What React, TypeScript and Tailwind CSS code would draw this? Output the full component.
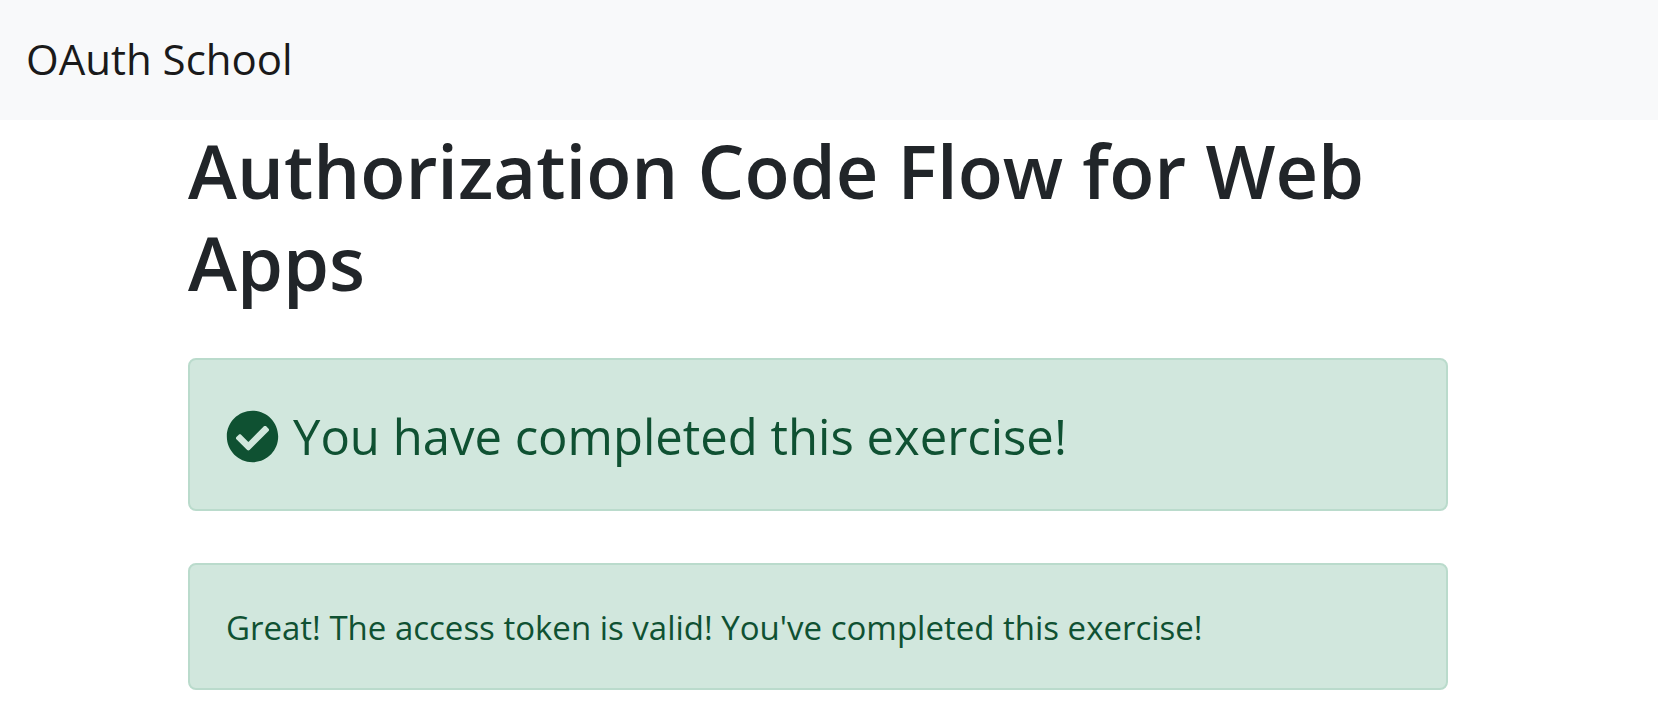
import type { ReactNode } from "react";
import { FaCheckCircle } from "react-icons/fa";

function SuccessAlert({ children }: { children: ReactNode }) {
  return (
    <div role="alert" className="rounded-lg border-2 border-[#badbcc] bg-[#d1e7dd] px-9 pt-[37px] pb-[35px] text-[#0f5132]">
      {children}
    </div>
  );
}

export default function App() {
  return (
    <div className="min-h-screen bg-white font-['Open_Sans','Noto_Sans',sans-serif] text-[#212529]">
      <header className="bg-[#f8f9fa] px-[26px] pt-[29px] pb-[31px]">
        <a href="#" className="block text-[42px] leading-[60px] text-[#1a1a1a]">OAuth School</a>
      </header>
      <main className="mr-[210px] ml-[188px] pt-[5px]">
        <h1 className="mb-[49px] text-[74px] leading-[92px] font-semibold">Authorization Code Flow for Web Apps</h1>
        <div className="flex flex-col gap-[52px]">
          <SuccessAlert>
            <h2 className="flex items-center gap-[14px] pt-[7px] pb-[5px] text-[49px] leading-[65px] font-normal">
              <FaCheckCircle className="size-[53px] shrink-0" aria-hidden="true" />
              You have completed this exercise!
            </h2>
          </SuccessAlert>
          <SuccessAlert>
            <p className="text-[33px] leading-[51px]">Great! The access token is valid! You've completed this exercise!</p>
          </SuccessAlert>
        </div>
      </main>
    </div>
  );
}
